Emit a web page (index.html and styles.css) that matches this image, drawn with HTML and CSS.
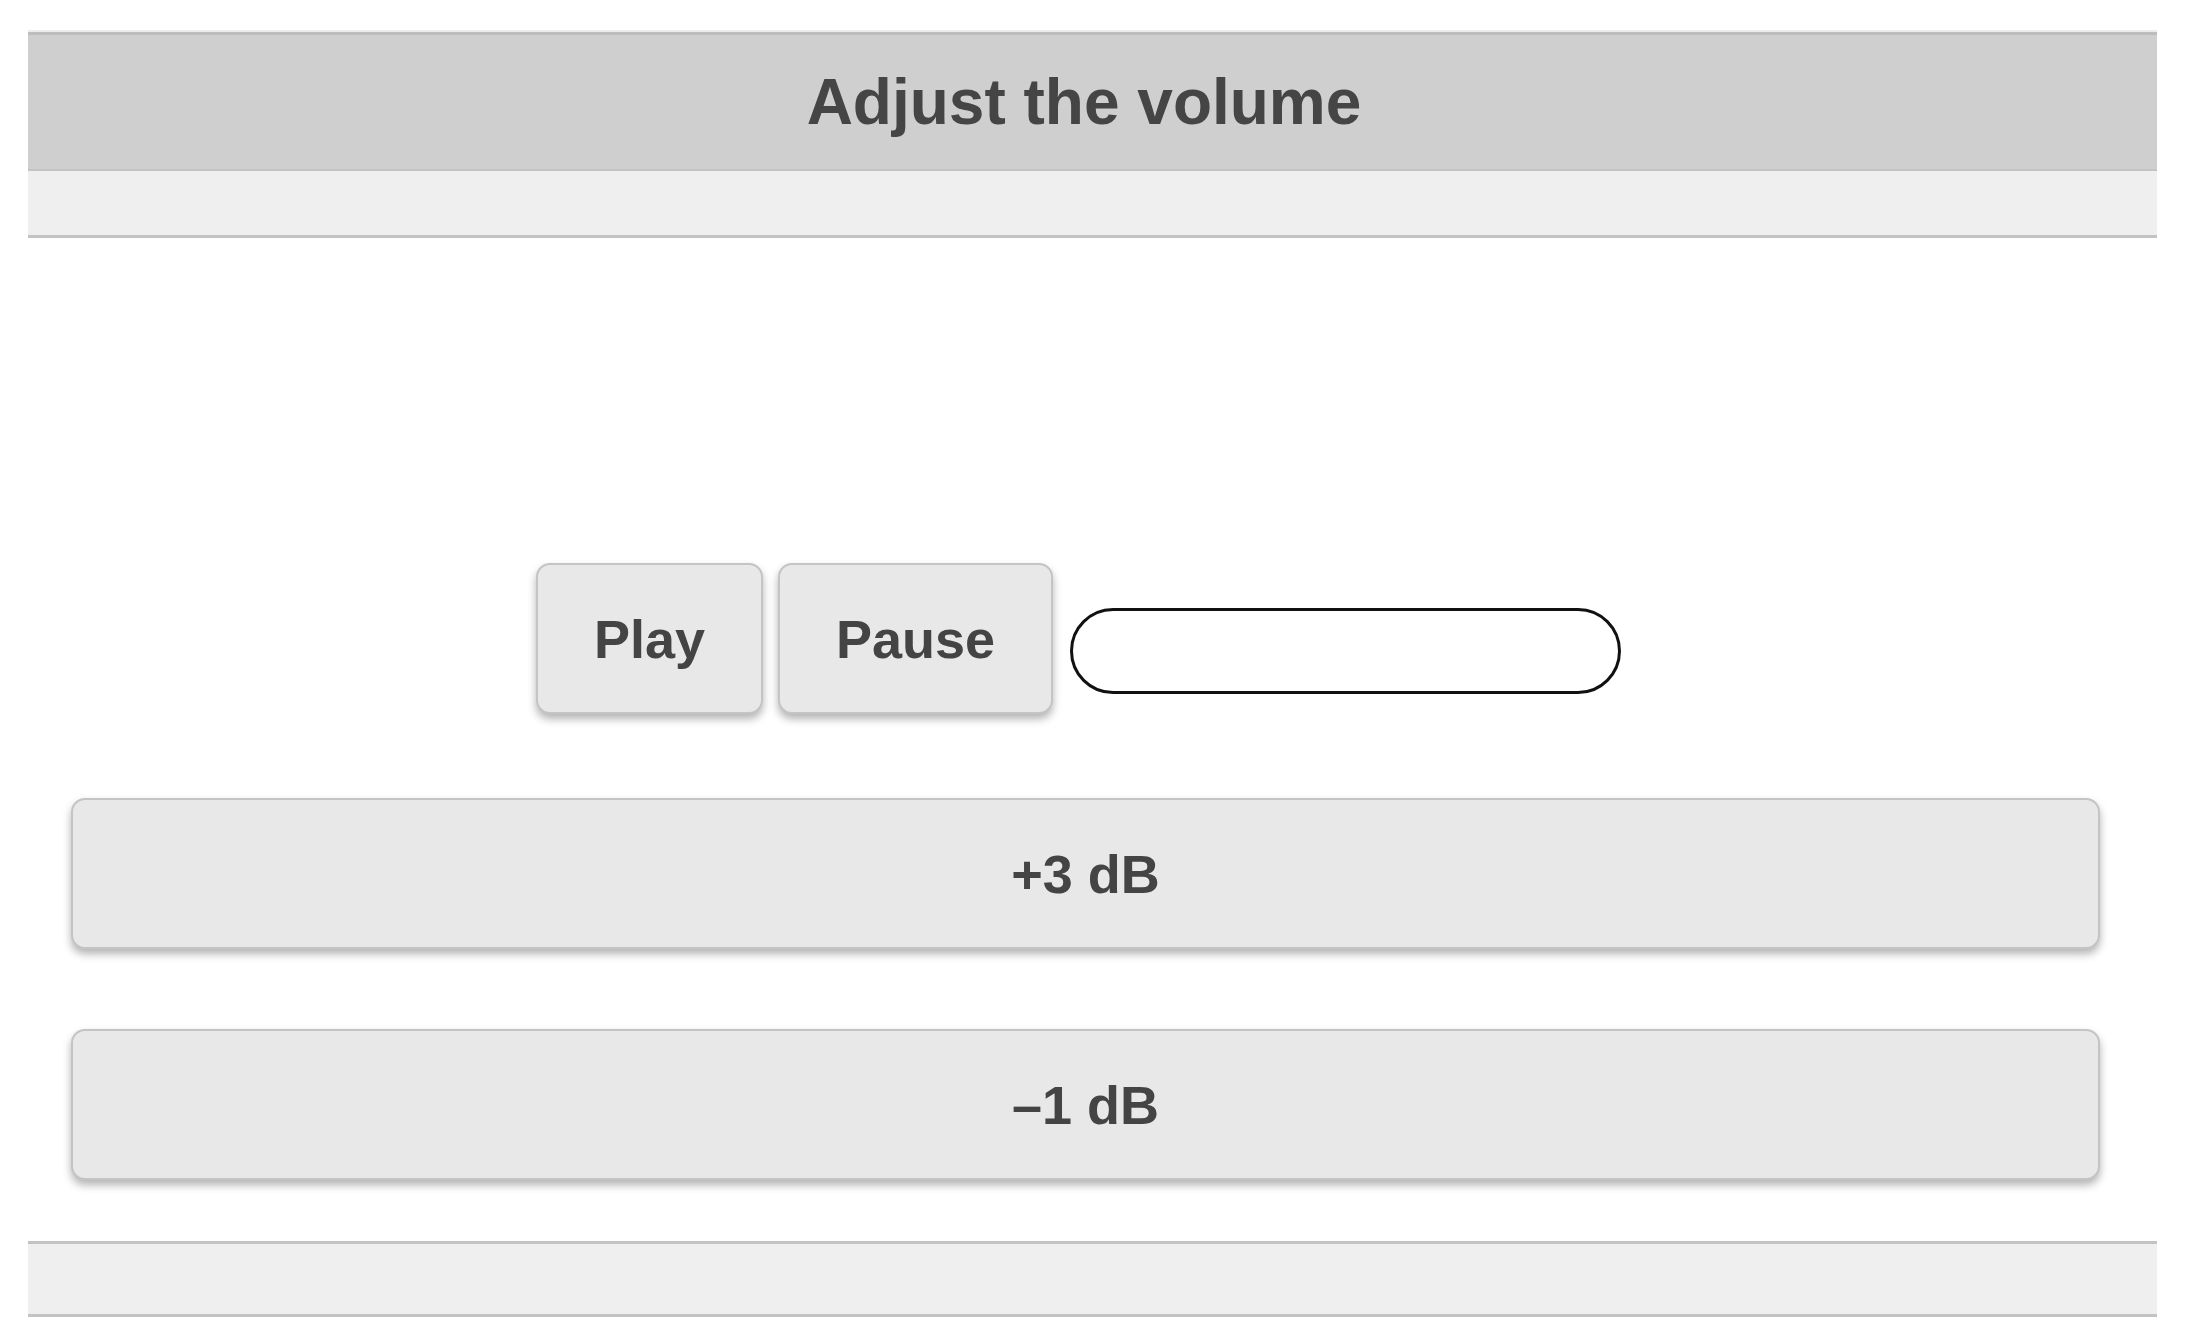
FILE: index.html
```html
<!DOCTYPE html>
<html lang="en">
<head>
<meta charset="utf-8">
<title>Adjust the volume</title>
<link rel="stylesheet" href="styles.css">
</head>
<body>
<div class="page">
  <header class="header">
    <h1 class="title">Adjust the volume</h1>
  </header>
  <div class="subbar"></div>
  <main class="content">
    <div class="player">
      <button class="btn btn-small">Play</button>
      <button class="btn btn-small">Pause</button>
      <div class="slider"></div>
    </div>
    <button class="btn btn-wide">+3 dB</button>
    <button class="btn btn-wide btn-second">–1 dB</button>
  </main>
  <footer class="footer"></footer>
</div>
</body>
</html>
```

FILE: styles.css
```css
html, body {
  margin: 0;
  padding: 0;
  background: #ffffff;
}

body {
  font-family: "Liberation Sans", Arial, sans-serif;
  color: #444444;
}

.page {
  padding: 32px 28px 0 28px;
}

.header {
  background: #cfcfcf;
  border-top: 3px solid #bdbdbd;
  border-bottom: 2px solid #c3c3c3;
  box-shadow: 0 -2px 0 #ececec;
  height: 134px;
  display: flex;
  align-items: center;
  justify-content: center;
  padding-right: 17px;
}

.title {
  margin: 0;
  font-size: 64px;
  font-weight: bold;
  color: #454545;
  line-height: 1;
}

.subbar {
  background: #efefef;
  height: 64px;
  border-bottom: 3px solid #c3c3c3;
}

.content {
  padding: 325px 57px 61px 43px;
  display: flex;
  flex-direction: column;
}

.player {
  display: flex;
  align-items: flex-start;
  justify-content: center;
  gap: 15px;
  padding-right: 14px;
}

.btn {
  font-family: "Liberation Sans", Arial, sans-serif;
  font-weight: bold;
  font-size: 54px;
  color: #444444;
  background: #e8e8e8;
  border: 2px solid #c4c4c4;
  border-radius: 14px;
  box-shadow: 0 5px 8px rgba(0, 0, 0, 0.3);
  height: 151px;
  box-sizing: border-box;
  display: flex;
  align-items: center;
  justify-content: center;
  line-height: 1;
  margin: 0;
}

.btn-small {
  padding: 0 56px;
}

.slider {
  margin-left: 2px;
  margin-top: 45px;
  width: 551px;
  height: 86px;
  box-sizing: border-box;
  border: 3px solid #111111;
  border-radius: 43px;
  background: #ffffff;
}

.btn-wide {
  width: 100%;
  margin-top: 84px;
}

.btn-second {
  margin-top: 80px;
}

.footer {
  background: #efefef;
  border-top: 3px solid #c3c3c3;
  border-bottom: 3px solid #c3c3c3;
  height: 70px;
}
```
